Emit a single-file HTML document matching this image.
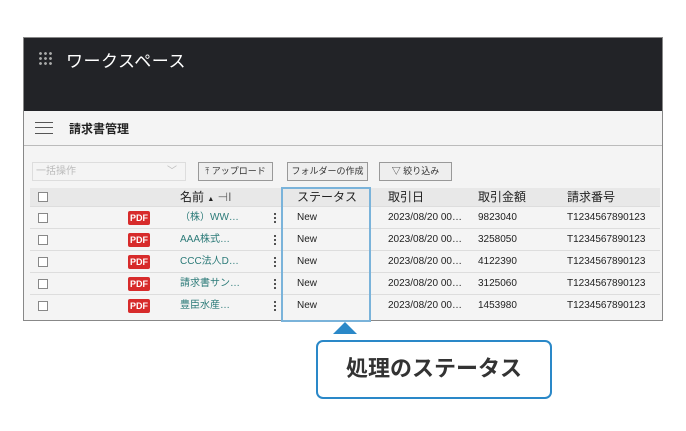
<!DOCTYPE html>
<html><head><meta charset="utf-8"><style>
*{margin:0;padding:0;box-sizing:border-box}
body{width:686px;height:431px;background:#fff;position:relative;overflow:hidden;font-family:"Liberation Sans","Noto Sans CJK JP",sans-serif;}
.frame{position:absolute;left:23px;top:37px;width:640px;height:284px;border:1px solid #888;background:#f4f4f4;overflow:hidden}
.hdr{position:absolute;left:0;top:0;width:100%;height:73px;background:#222327;color:#fff}
.hdr .t{position:absolute;left:42px;top:9px;font-size:17px;letter-spacing:.5px}
.dots{position:absolute;left:14px;top:13px;width:14px;height:14px;background:radial-gradient(circle,#aaa 1.2px,transparent 1.6px) 0 0/5px 5px}
.bar{position:absolute;left:0;top:73px;width:100%;height:35px;border-bottom:1px solid #bbb}
.ham{position:absolute;left:11px;top:11px;width:18px;height:12px;border-top:1.5px solid #555;border-bottom:1.5px solid #555}
.ham:after{content:"";position:absolute;left:0;top:4px;width:18px;border-top:1.5px solid #555}
.bar .t{position:absolute;left:45px;top:9px;font-size:12px;font-weight:bold;color:#222}
.btn{position:absolute;top:124px;height:19px;border:1px solid #999;background:#eee;font-size:9px;color:#333;line-height:17px;text-align:center;white-space:nowrap;overflow:hidden}
.sel{position:absolute;left:8px;top:124px;width:154px;height:19px;border:1px solid #ddd;background:#f4f4f4;font-size:10px;color:#bbb;line-height:17px;padding-left:3px}
.row{position:absolute;left:6px;width:630px;height:22px;border-bottom:1px solid #ddd;font-size:10px;color:#222;line-height:22px}
.row.h{background:#e8e8e8;font-size:12px;height:19px;line-height:19px}
.row span{position:absolute}
.cb{left:8px;top:6px;width:10px;height:10px;border:1px solid #888;background:#fff}
.h .cb{top:4px}
.pdf{left:98px;top:4px;width:22px;height:14px;background:#d72b2b;color:#fff;font-weight:bold;font-size:9px;line-height:14px;text-align:center;border-radius:2px}
.nm{left:150px;color:#2b7a78}
.kb{left:244px;top:5px;width:2px;height:12px;background:radial-gradient(circle,#444 1px,transparent 1.2px) 0 0/2px 4px}
.st{left:267px}.dt{left:358px}.am{left:448px}.no{left:537px}
.hl{position:absolute;left:281px;top:187px;width:90px;height:135px;border:2px solid #7ab3da}
.tri{position:absolute;left:333px;top:322px;width:0;height:0;border-left:12px solid transparent;border-right:12px solid transparent;border-bottom:12px solid #2a88c8}
.call{position:absolute;left:316px;top:340px;width:236px;height:59px;border:2.5px solid #2a88c8;border-radius:7px;background:#fff;font-size:22px;font-weight:bold;color:#333;text-align:center;line-height:54px}
</style></head><body>
<div class="frame">
 <div class="hdr"><div class="dots"></div><div class="t">ワークスペース</div></div>
 <div class="bar"><div class="ham"></div><div class="t">請求書管理</div></div>
 <div class="sel">一括操作<span style="position:absolute;right:8px;color:#bbb">﹀</span></div>
 <div class="btn" style="left:174px;width:75px">⤒ アップロード</div>
 <div class="btn" style="left:263px;width:81px">フォルダーの作成</div>
 <div class="btn" style="left:355px;width:73px">▽ 絞り込み</div>
 <div class="row h" style="top:150px"><span class="cb"></span><span style="left:150px">名前 <small style="font-size:7px">▲</small> <span style="position:static;color:#666">⊣I</span></span><span class="st">ステータス</span><span class="dt">取引日</span><span class="am">取引金額</span><span class="no">請求番号</span></div>
 <div class="row" style="top:169px"><span class="cb"></span><span class="pdf">PDF</span><span class="nm">（株）WW…</span><span class="kb"></span><span class="st">New</span><span class="dt">2023/08/20 00…</span><span class="am">9823040</span><span class="no">T1234567890123</span></div>
 <div class="row" style="top:191px"><span class="cb"></span><span class="pdf">PDF</span><span class="nm">AAA株式…</span><span class="kb"></span><span class="st">New</span><span class="dt">2023/08/20 00…</span><span class="am">3258050</span><span class="no">T1234567890123</span></div>
 <div class="row" style="top:213px"><span class="cb"></span><span class="pdf">PDF</span><span class="nm">CCC法人D…</span><span class="kb"></span><span class="st">New</span><span class="dt">2023/08/20 00…</span><span class="am">4122390</span><span class="no">T1234567890123</span></div>
 <div class="row" style="top:235px"><span class="cb"></span><span class="pdf">PDF</span><span class="nm">請求書サン…</span><span class="kb"></span><span class="st">New</span><span class="dt">2023/08/20 00…</span><span class="am">3125060</span><span class="no">T1234567890123</span></div>
 <div class="row" style="top:257px;border-bottom:none"><span class="cb"></span><span class="pdf">PDF</span><span class="nm">豊臣水産…</span><span class="kb"></span><span class="st">New</span><span class="dt">2023/08/20 00…</span><span class="am">1453980</span><span class="no">T1234567890123</span></div>
</div>
<div class="hl"></div>
<div class="tri"></div>
<div class="call">処理のステータス</div>
</body></html>
